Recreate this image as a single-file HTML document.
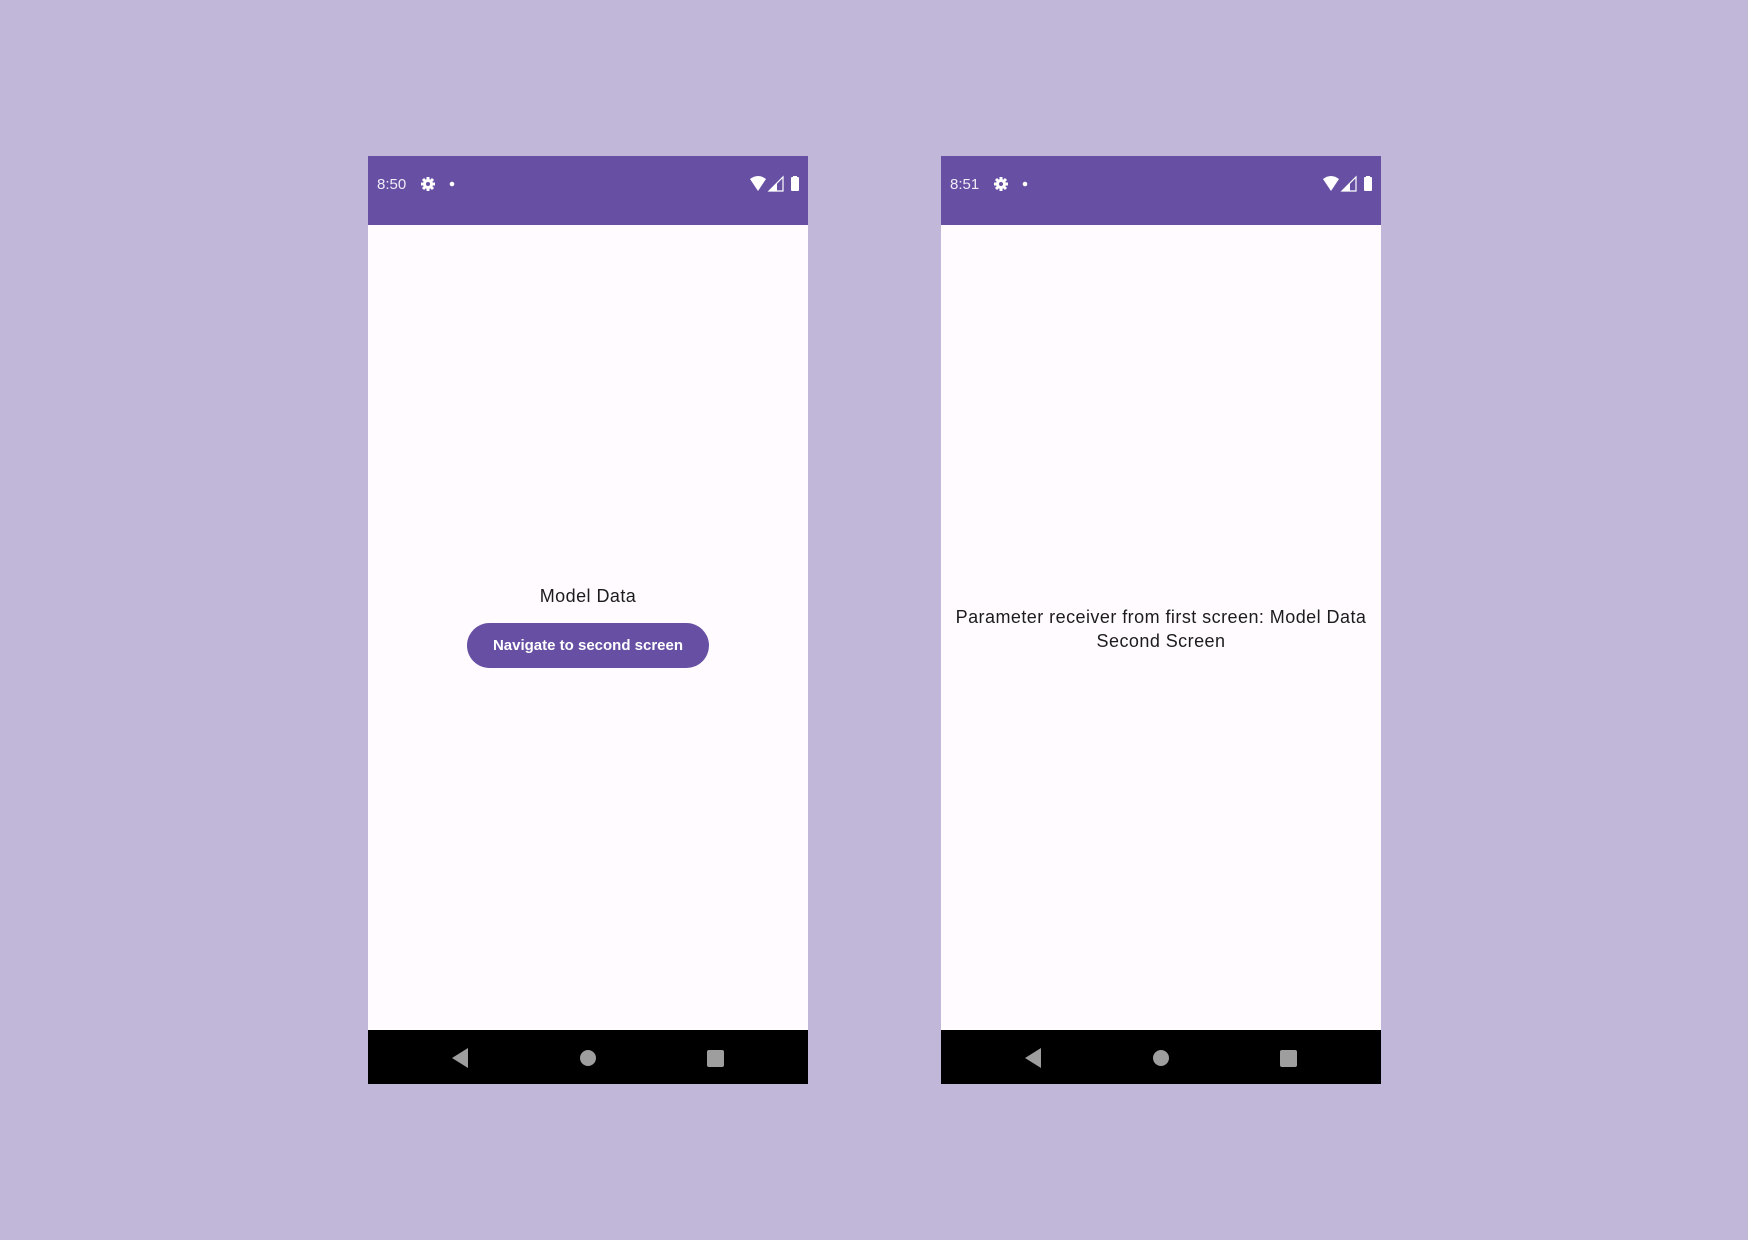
<!DOCTYPE html>
<html><head><style>
*{margin:0;padding:0;box-sizing:border-box}
body{width:1748px;height:1240px;background:#c0b7d9;position:relative;overflow:hidden;font-family:"Liberation Sans",sans-serif}
.ph{position:absolute;top:156px;width:440px;height:928px;background:#fffbfe}
.sb{position:absolute;left:0;top:0;width:440px;height:69px;background:#6750a4}
.nb{position:absolute;left:0;bottom:0;width:440px;height:54px;background:#000}
.t{position:absolute;left:9px;top:20px;color:#f0ecf8;font-size:15px}
.c{position:absolute;left:0;width:440px;text-align:center;color:#1c1b1f;font-size:18px;letter-spacing:0.45px}
.btn{position:absolute;left:99px;top:467px;width:242px;height:45px;border-radius:23px;background:#6750a4;color:#fff;font-size:15px;font-weight:bold;text-align:center;line-height:46px}
</style></head><body>
<div class="ph" style="left:368px">
 <div class="sb"><span class="t">8:50</span>
 <svg style="position:absolute;left:0;top:0" width="440" height="69">
  <g fill="#fff">
   <circle cx="60" cy="28" r="5"/><g stroke="#fff" stroke-width="3"><line x1="60" y1="21" x2="60" y2="35"/><line x1="53" y1="28" x2="67" y2="28"/><line x1="55" y1="23" x2="65" y2="33"/><line x1="65" y1="23" x2="55" y2="33"/></g>
   <circle cx="60" cy="28" r="2" fill="#6750a4"/>
   <circle cx="84" cy="28" r="2.3"/>
   <path d="M382 23 Q390 17 398 23 L390 35 Z"/>
   <path d="M415 21 L415 35 L401 35 Z" fill="none" stroke="#fff" stroke-width="1.2"/>
   <path d="M409 27 L409 35 L401 35 Z"/>
   <rect x="423" y="21" width="8" height="14" rx="1"/><rect x="425" y="20" width="4" height="2"/>
  </g></svg></div>
 <div class="c" style="top:430px">Model Data</div>
 <div class="btn">Navigate to second screen</div>
 <div class="nb"><svg width="440" height="54"><g fill="#9e9e9e">
  <path d="M100 18 L100 38 L84 28 Z"/><circle cx="220" cy="28" r="8"/><rect x="339" y="20" width="17" height="17" rx="2"/></g></svg></div>
</div>
<div class="ph" style="left:941px">
 <div class="sb"><span class="t">8:51</span>
 <svg style="position:absolute;left:0;top:0" width="440" height="69">
  <g fill="#fff">
   <circle cx="60" cy="28" r="5"/><g stroke="#fff" stroke-width="3"><line x1="60" y1="21" x2="60" y2="35"/><line x1="53" y1="28" x2="67" y2="28"/><line x1="55" y1="23" x2="65" y2="33"/><line x1="65" y1="23" x2="55" y2="33"/></g>
   <circle cx="60" cy="28" r="2" fill="#6750a4"/>
   <circle cx="84" cy="28" r="2.3"/>
   <path d="M382 23 Q390 17 398 23 L390 35 Z"/>
   <path d="M415 21 L415 35 L401 35 Z" fill="none" stroke="#fff" stroke-width="1.2"/>
   <path d="M409 27 L409 35 L401 35 Z"/>
   <rect x="423" y="21" width="8" height="14" rx="1"/><rect x="425" y="20" width="4" height="2"/>
  </g></svg></div>
 <div class="c" style="top:449px;line-height:24px">Parameter receiver from first screen: Model Data<br>Second Screen</div>
 <div class="nb"><svg width="440" height="54"><g fill="#9e9e9e">
  <path d="M100 18 L100 38 L84 28 Z"/><circle cx="220" cy="28" r="8"/><rect x="339" y="20" width="17" height="17" rx="2"/></g></svg></div>
</div>
</body></html>
